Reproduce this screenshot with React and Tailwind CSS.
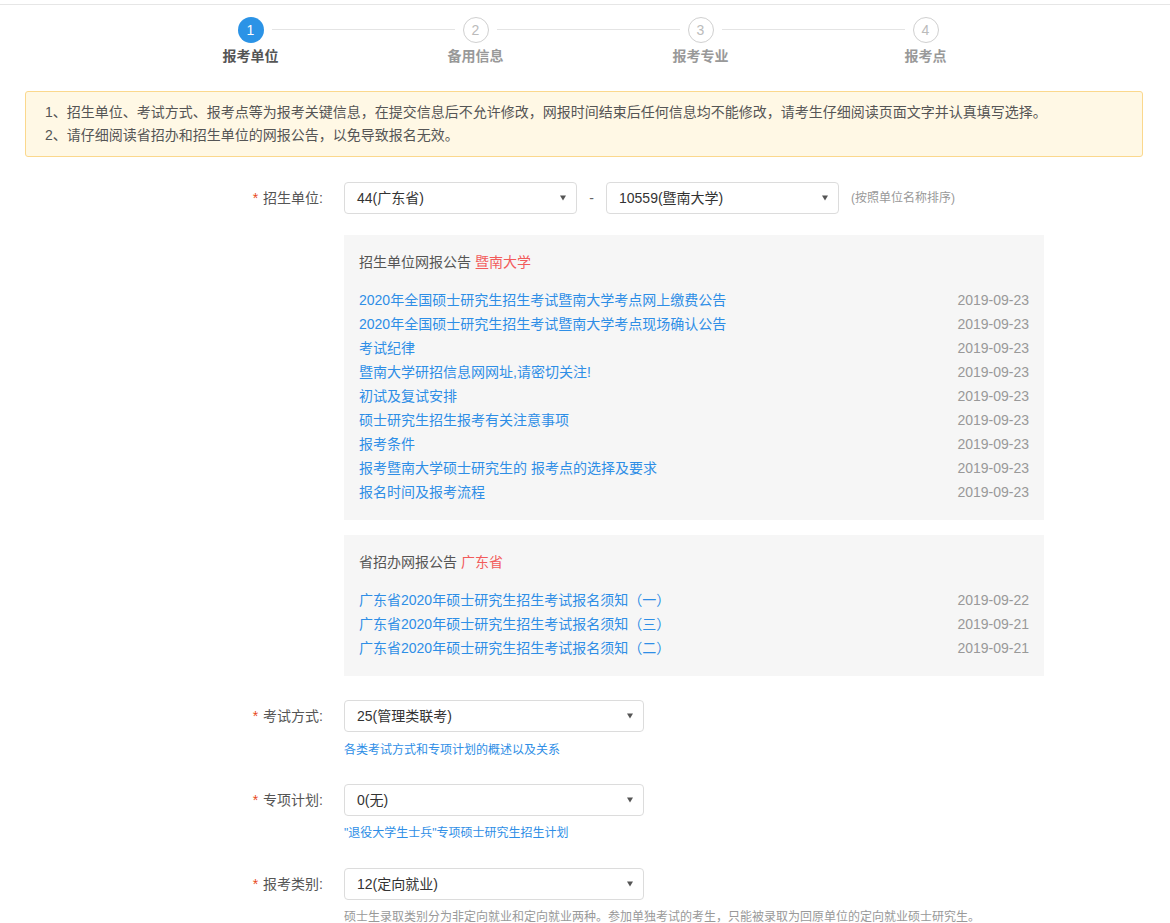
import React from 'react';

const steps = ['报考单位', '备用信息', '报考专业', '报考点'];

const unitNotices = [
  ['2020年全国硕士研究生招生考试暨南大学考点网上缴费公告', '2019-09-23'],
  ['2020年全国硕士研究生招生考试暨南大学考点现场确认公告', '2019-09-23'],
  ['考试纪律', '2019-09-23'],
  ['暨南大学研招信息网网址,请密切关注!', '2019-09-23'],
  ['初试及复试安排', '2019-09-23'],
  ['硕士研究生招生报考有关注意事项', '2019-09-23'],
  ['报考条件', '2019-09-23'],
  ['报考暨南大学硕士研究生的 报考点的选择及要求', '2019-09-23'],
  ['报名时间及报考流程', '2019-09-23'],
];

const provNotices = [
  ['广东省2020年硕士研究生招生考试报名须知（一）', '2019-09-22'],
  ['广东省2020年硕士研究生招生考试报名须知（三）', '2019-09-21'],
  ['广东省2020年硕士研究生招生考试报名须知（二）', '2019-09-21'],
];

function Select({ value, width }) {
  return (
    <div className={`${width} h-[32px] border border-[#dcdcdc] rounded-[4px] bg-white flex items-center justify-between pl-[12px] pr-[10px] text-[14px] text-[#333]`}>
      <span>{value}</span>
      <svg width="6" height="6" viewBox="0 0 6 6"><path d="M0 0.5H6L3 5.5Z" fill="#555" /></svg>
    </div>
  );
}

function Label({ text }) {
  return (
    <div className="w-[344px] pr-[21px] h-[32px] flex items-center justify-end text-[14px] text-[#555]">
      <span className="text-[#e8491d] mr-[5px]">*</span>
      <span>{text}:</span>
    </div>
  );
}

function NoticePanel({ title, highlight, items }) {
  return (
    <div className="w-[700px] bg-[#f6f6f6] pt-[15px] pb-[16px] px-[15px]">
      <div className="text-[14px] leading-[24px] text-[#555]">
        {title} <span className="text-[#f25b5b]">{highlight}</span>
      </div>
      <div className="mt-[14px]">
        {items.map(([t, d]) => (
          <div key={t} className="flex justify-between text-[14px] leading-[24px]">
            <span className="text-[#2e8ee6]">{t}</span>
            <span className="text-[#999]">{d}</span>
          </div>
        ))}
      </div>
    </div>
  );
}

export default function App() {
  return (
    <div className="w-[1170px] min-h-[923px] bg-white" style={{ fontFamily: '"Liberation Sans", "Noto Sans CJK SC", sans-serif' }}>
      <div className="h-[4px]" />
      <div className="border-t border-[#e6e6e6]" />

      {/* steps */}
      <div className="ml-[138px] w-[900px] grid grid-cols-4 mt-[12px]">
        {steps.map((s, i) => (
          <div key={s} className="relative flex flex-col items-center">
            {i === 0 ? (
              <div className="w-[26px] h-[26px] rounded-full bg-[#2b93e6] text-white text-[14px] flex items-center justify-center">1</div>
            ) : (
              <div className="w-[26px] h-[26px] rounded-full border border-[#d0d0d0] text-[#bbb] text-[14px] flex items-center justify-center">{i + 1}</div>
            )}
            {i < 3 && <div className="absolute top-[12px] left-[calc(50%+21px)] w-[183px] h-px bg-[#e4e4e4]" />}
            <div className={`mt-[3px] text-[14px] leading-[20px] font-bold ${i === 0 ? 'text-[#555]' : 'text-[#999]'}`}>{s}</div>
          </div>
        ))}
      </div>

      {/* tips */}
      <div className="mx-[25px] w-[1118px] mt-[25px] border border-[#fbd88d] bg-[#fff8e5] rounded-[3px] pl-[19px] pt-[9px] pb-[9px] text-[14px] leading-[23px] text-[#555]">
        <p>1、招生单位、考试方式、报考点等为报考关键信息，在提交信息后不允许修改，网报时间结束后任何信息均不能修改，请考生仔细阅读页面文字并认真填写选择。</p>
        <p>2、请仔细阅读省招办和招生单位的网报公告，以免导致报名无效。</p>
      </div>

      {/* form */}
      <div className="mt-[25px]">
        <div className="flex items-start">
          <Label text="招生单位" />
          <div className="flex flex-col">
            <div className="flex items-center">
              <Select value="44(广东省)" width="w-[233px]" />
              <span className="w-[29px] text-center text-[14px] text-[#666]">-</span>
              <Select value="10559(暨南大学)" width="w-[233px]" />
              <span className="ml-[12px] text-[12px] text-[#999]">(按照单位名称排序)</span>
            </div>
            <div className="mt-[21px]">
              <NoticePanel title="招生单位网报公告" highlight="暨南大学" items={unitNotices} />
            </div>
            <div className="mt-[15px]">
              <NoticePanel title="省招办网报公告" highlight="广东省" items={provNotices} />
            </div>
          </div>
        </div>

        <div className="flex items-start mt-[24px]">
          <Label text="考试方式" />
          <div>
            <Select value="25(管理类联考)" width="w-[300px]" />
            <div className="mt-[9px] text-[12px] leading-[18px] text-[#2e8ee6]">各类考试方式和专项计划的概述以及关系</div>
          </div>
        </div>

        <div className="flex items-start mt-[25px]">
          <Label text="专项计划" />
          <div>
            <Select value="0(无)" width="w-[300px]" />
            <div className="mt-[8px] text-[12px] leading-[18px] text-[#2e8ee6]">"退役大学生士兵"专项硕士研究生招生计划</div>
          </div>
        </div>

        <div className="flex items-start mt-[26px]">
          <Label text="报考类别" />
          <div>
            <Select value="12(定向就业)" width="w-[300px]" />
            <div className="mt-[8px] text-[12px] leading-[18px] text-[#999]">硕士生录取类别分为非定向就业和定向就业两种。参加单独考试的考生，只能被录取为回原单位的定向就业硕士研究生。</div>
          </div>
        </div>
      </div>
    </div>
  );
}
